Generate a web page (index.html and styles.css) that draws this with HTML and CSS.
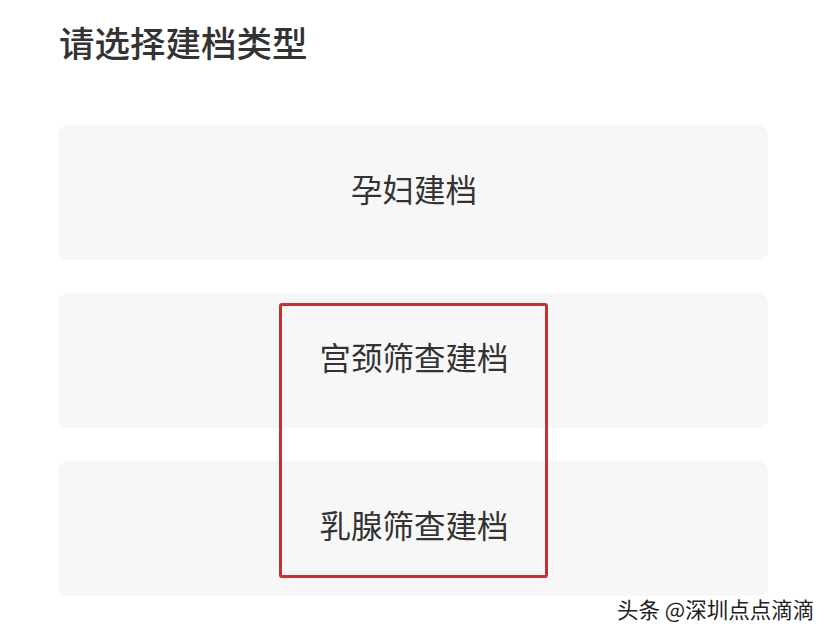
FILE: index.html
```html
<!DOCTYPE html>
<html lang="zh">
<head>
<meta charset="utf-8">
<link rel="stylesheet" href="styles.css">
</head>
<body>
<div class="page">
  <h1 class="title">请选择建档类型</h1>
  <div class="list">
    <div class="card">孕妇建档</div>
    <div class="card">宫颈筛查建档</div>
    <div class="card">乳腺筛查建档</div>
  </div>
  <div class="highlight"></div>
  <div class="watermark">头条 @深圳点点滴滴</div>
</div>
</body>
</html>
```
FILE: styles.css
```css
html, body {
  margin: 0;
  padding: 0;
  background: #ffffff;
}
.page {
  position: relative;
  width: 828px;
  height: 639px;
  overflow: hidden;
  box-sizing: border-box;
  padding: 20px 60px 0 58px;
  font-family: "Noto Sans CJK SC", "Noto Sans", sans-serif;
  color: #333333;
}
.title {
  margin: 0 0 0 1px;
  font-size: 35.5px;
  line-height: 44px;
  font-weight: 500;
  color: #333333;
}
.list {
  margin-top: 61px;
  display: flex;
  flex-direction: column;
  gap: 33px;
}
.card {
  height: 135px;
  background: #f7f7f7;
  border-radius: 10px;
  display: flex;
  align-items: center;
  justify-content: center;
  font-size: 31.5px;
  line-height: 40px;
  color: #333333;
  padding-left: 2px;
  padding-bottom: 10px;
  box-sizing: border-box;
}
.highlight {
  position: absolute;
  left: 279px;
  top: 303px;
  width: 269px;
  height: 275px;
  box-sizing: border-box;
  border: 3px solid #c8312f;
  border-radius: 3px;
}
.watermark {
  position: absolute;
  left: 617px;
  top: 595px;
  font-size: 21.5px;
  line-height: 28px;
  color: #222222;
  text-shadow: 0 0 2px #ffffff, 1px 1px 1px #ffffff;
}
```
